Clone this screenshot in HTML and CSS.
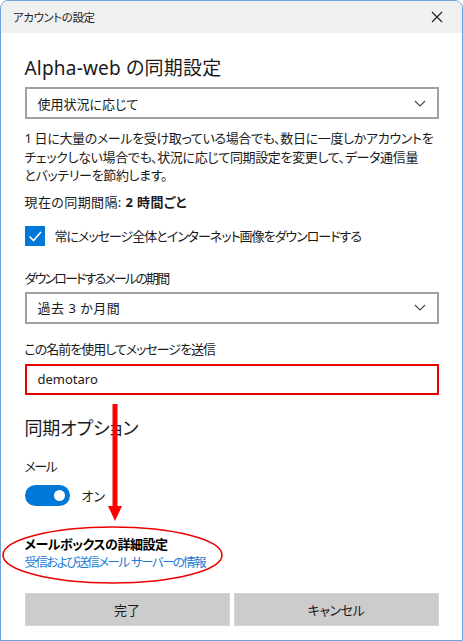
FILE: index.html
```html
<!DOCTYPE html>
<html lang="ja">
<head>
<meta charset="utf-8">
<title>アカウントの設定</title>
<link rel="stylesheet" href="styles.css">
</head>
<body>
<div class="window">
  <div class="titlebar">
    <span class="title">アカウントの設定</span>
    <svg class="close" width="12" height="12" viewBox="0 0 12 12"><path d="M1 1 L11 11 M11 1 L1 11" stroke="#222" stroke-width="1.2" fill="none"/></svg>
  </div>
  <div class="content">
    <h1 class="heading heading-main">Alpha-web の同期設定</h1>
    <div class="select select-first">
      <span>使用状況に応じて</span>
      <svg class="chev" width="12" height="7" viewBox="0 0 12 7"><path d="M1 1 L6 6 L11 1" stroke="#444" stroke-width="1.1" fill="none"/></svg>
    </div>
    <p class="desc">1 日に大量のメールを受け取っている場合でも、数日に一度しかアカウントを<br>チェックしない場合でも、状況に応じて同期設定を変更して、データ通信量<br>とバッテリーを節約します。</p>
    <p class="interval">現在の同期間隔: <b>2 時間ごと</b></p>
    <div class="check-row">
      <span class="checkbox"><svg width="20" height="20" viewBox="0 0 20 20"><path d="M4.5 10.5 L8.5 14.5 L16 6" stroke="#fff" stroke-width="1.6" fill="none"/></svg></span>
      <span class="check-text">常にメッセージ全体とインターネット画像をダウンロードする</span>
    </div>
    <div class="label label-period">ダウンロードするメールの期間</div>
    <div class="select select-period">
      <span>過去 3 か月間</span>
      <svg class="chev" width="12" height="7" viewBox="0 0 12 7"><path d="M1 1 L6 6 L11 1" stroke="#444" stroke-width="1.1" fill="none"/></svg>
    </div>
    <div class="label label-name">この名前を使用してメッセージを送信</div>
    <div class="input">demotaro</div>
    <h2 class="heading heading-sync">同期オプション</h2>
    <div class="label label-mail">メール</div>
    <div class="toggle-row">
      <span class="toggle"><span class="knob"></span></span>
      <span>オン</span>
    </div>
    <div class="advanced">メールボックスの詳細設定</div>
    <div class="link">受信および送信メール サーバーの情報</div>
    <div class="buttons">
      <div class="btn">完了</div>
      <div class="btn btn-cancel">キャンセル</div>
    </div>
  </div>
  <svg class="annot" width="463" height="641" viewBox="0 0 463 641">
    <rect x="112.5" y="404" width="5" height="104" fill="#f00"/>
    <path d="M108 506 L122 506 L115 521 Z" fill="#f00"/>
    <ellipse cx="112.5" cy="555" rx="109.5" ry="28" stroke="#e00" stroke-width="1.6" fill="none"/>
  </svg>
</div>
</body>
</html>
```
FILE: styles.css
```css
* { box-sizing: border-box; }
html, body { margin: 0; padding: 0; background: #fff; }
body {
  font-family: "Noto Sans", "Noto Sans CJK JP", sans-serif;
  font-feature-settings: "palt";
  color: #1a1a1a;
  font-size: 13px;
}
.window {
  position: relative;
  width: 463px;
  height: 641px;
  border: 1.5px solid #6aa3dc;
  border-top-left-radius: 8px;
  border-top-right-radius: 8px;
  overflow: hidden;
  display: flex;
  flex-direction: column;
}
.titlebar {
  height: 32px;
  background: #f0f0f0;
  display: flex;
  align-items: center;
  justify-content: space-between;
  padding: 0 19px 0 12px;
  flex: none;
}
.title { font-size: 11.5px; color: #222; letter-spacing: -0.4px; }
.content {
  padding: 0 23.5px 0 23.5px;
  display: flex;
  flex-direction: column;
}
.heading {
  margin: 0;
  font-weight: normal;
  font-size: 18px;
  line-height: 28px;
  color: #1a1a1a;
}
.heading-main { margin-top: 21px; font-size: 19px; letter-spacing: 0.2px; }
.select {
  height: 32px;
  border: 2px solid #a0a0a0;
  display: flex;
  align-items: center;
  justify-content: space-between;
  padding: 0 11px 0 11px;
  font-size: 13px;
}
.select-first { margin-top: 5px; }
.select-period span { letter-spacing: 0.5px; }
.desc {
  margin: 10px 0 0 0;
  line-height: 18.5px;
  font-size: 13px;
  letter-spacing: -0.35px;
  white-space: nowrap;
}
.interval {
  margin: 8px 0 0 0;
  line-height: 18px;
  letter-spacing: 0.4px;
}
.interval b { font-weight: bold; }
.check-row {
  margin-top: 15px;
  display: flex;
  align-items: center;
  gap: 10px;
}
.check-text { letter-spacing: -1px; }
.checkbox {
  width: 20px;
  height: 20px;
  background: #0078d7;
  display: flex;
}
.label { line-height: 18px; }
.label-period { margin-top: 23px; letter-spacing: -1.8px; }
.label-period + .select { margin-top: 5px; }
.label-name { margin-top: 16px; letter-spacing: -1px; }
.input {
  margin-top: 6px;
  height: 31px;
  border: 2px solid #e60000;
  padding: 0 11px;
  display: flex;
  align-items: center;
  font-size: 13px;
}
.heading-sync { margin-top: 19px; letter-spacing: -0.2px; }
.label-mail { margin-top: 15px; letter-spacing: -1.5px; }
.toggle-row {
  margin-top: 10px;
  display: flex;
  align-items: center;
  gap: 12px;
}
.toggle {
  width: 45px;
  height: 21px;
  border-radius: 11px;
  background: #0078d7;
  display: flex;
  align-items: center;
  justify-content: flex-end;
  padding-right: 5px;
}
.knob { width: 11px; height: 11px; border-radius: 50%; background: #fff; }
.advanced {
  margin-top: 29px;
  font-weight: bold;
  line-height: 18px;
  color: #000;
  letter-spacing: -0.5px;
}
.link {
  color: #1a7ad6;
  line-height: 18px;
  font-size: 12.5px;
  letter-spacing: -1.6px;
  word-spacing: 1px;
  margin-top: 1px;
}
.buttons {
  margin-top: 21px;
  display: flex;
  gap: 4px;
}
.btn {
  flex: 1;
  height: 33px;
  background: #cccccc;
  border: 1px solid #d6d6d6;
  display: flex;
  align-items: center;
  justify-content: center;
  font-size: 13px;
  color: #1a1a1a;
}
.btn-cancel { letter-spacing: -0.5px; }
.annot { position: absolute; left: -1.5px; top: -1.5px; pointer-events: none; }
```
